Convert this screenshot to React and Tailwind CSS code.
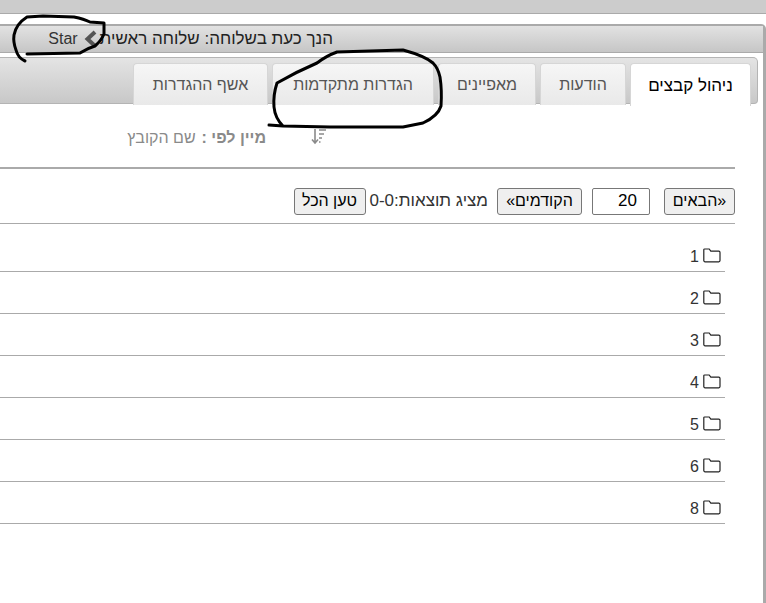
import React from "react";

const tabs = [
  { label: "ניהול קבצים", w: "w-[121px]", active: true },
  { label: "הודעות", w: "w-[86px]" },
  { label: "מאפיינים", w: "w-[98px]" },
  { label: "הגדרות מתקדמות", w: "w-[162px]" },
  { label: "אשף ההגדרות", w: "w-[135px]" },
];

const folders = ["1", "2", "3", "4", "5", "6", "8"];

const FolderIcon = () => (
  <svg width="18" height="15" viewBox="0 0 18 15" fill="none" stroke="#222" strokeWidth="1.2" className="shrink-0">
    <path d="M1.6 1h4.6l1.6 2.2h8a1.2 1.2 0 0 1 1.2 1.2v8.2a1.2 1.2 0 0 1-1.2 1.2H2a1.2 1.2 0 0 1-1.2-1.2V1.8A.8.8 0 0 1 1.6 1z" />
  </svg>
);

const SortIcon = () => (
  <svg width="17" height="17" viewBox="0 0 17 17" fill="none" stroke="#8a8a8a" strokeWidth="1.6" className="shrink-0">
    <path d="M5 1v13M2 11.500l3 3.500 3-3.500" />
    <path d="M9 2h7M9 6h5M9 10h3M9 14h1.500" />
  </svg>
);

const App = () => {
  return (
    <div dir="rtl" className="relative w-[766px] h-[603px] overflow-hidden bg-white font-['Liberation_Sans',Arial,sans-serif] text-[16px] text-[#222]">
      <div className="h-[14px] bg-[#cccccc] border-b border-[#aaaaaa]" />

      {/* Panel */}
      <div className="mt-[10px] ml-[-10px] h-[600px] border-t-2 border-r-[3px] border-[#aaaaaa] rounded-tr-[5px]">
        <div className="flex items-center h-[27px] pr-[430px] bg-gradient-to-b from-[#e2e2e2] to-[#c6c6c6] border-b border-[#aaaaaa]">
          <span className="text-[17px] whitespace-nowrap">הנך כעת בשלוחה: שלוחה ראשית</span>
          <svg width="17" height="18" viewBox="0 0 17 18" fill="none" stroke="#555" strokeWidth="4" className="mr-[0px] ml-[5px] shrink-0">
            <path d="M12 2 4.500 9l7.500 7" />
          </svg>
          <span className="text-[16px] text-[#333]">Star</span>
        </div>

        {/* Tabs */}
        <div className="mt-[4px] mr-[5px] h-[47px] flex gap-[4px] pr-[6px] pt-[5px] rounded-t-[5px] rounded-bl-none rounded-br-[4px] border-t border-r border-b border-[#b4b4b4] bg-gradient-to-b from-[#e4e4e4] to-[#c8c8c8]">
          {tabs.map((tab) => (
            <div
              key={tab.label}
              className={`${tab.w} flex justify-center pt-[9px] rounded-t-[4px] border-t border-x border-[#d6d6d6] whitespace-nowrap ${
                tab.active
                  ? "h-[43px] bg-white text-black text-[17px] border-[#bbbbbb]"
                  : "h-[42px] bg-gradient-to-b from-[#f6f6f6] to-[#e9e9e9] text-[#555] text-[16px]"
              }`}
            >
              {tab.label}
            </div>
          ))}
        </div>

        {/* Sort row */}
        <div className="flex items-start h-[65px] mr-[28px] pt-[24px] pr-[408px] border-b-2 border-[#aaaaaa] text-[#8a8a8a]">
          <SortIcon />
          <div className="mr-[44px] mt-[1px] text-[16px] leading-[18px] whitespace-nowrap">
            <span className="font-bold">מיין לפי :</span>
            <span className="mr-[6px]">שם הקובץ</span>
          </div>
        </div>

        {/* Paging */}
        <div className="flex items-center h-[55px] mr-[28px] pt-[10px] border-b border-[#aaaaaa]">
          <button className="w-[71px] h-[27px] border border-[#777] rounded-[3px] bg-[#efefef] text-[16px] text-black">«הבאים</button>
          <input
            defaultValue="20"
            dir="ltr"
            className="w-[58px] h-[27px] mr-[14px] pr-[12px] border border-[#777] rounded-[2px] text-[17px] text-black text-right outline-none"
          />
          <button className="w-[85px] h-[27px] mr-[10px] border border-[#777] rounded-[3px] bg-[#efefef] text-[16px] text-black">הקודמים»</button>
          <span className="mr-[9px] text-[17px] text-[#333] whitespace-nowrap">מציג תוצאות:0-0</span>
          <button className="w-[72px] h-[27px] mr-[4px] border border-[#777] rounded-[3px] bg-[#efefef] text-[16px] text-black">טען הכל</button>
        </div>

        {/* Folder list */}
        <div className="mr-[38px]">
          {folders.map((name, i) => (
            <div
              key={name}
              className={`flex items-center gap-[4px] pr-[4px] border-b border-[#aaaaaa] text-[16px] text-[#333] ${i === 0 ? "h-[48px] pt-[16px]" : "h-[42px] pt-[10px]"}`}
            >
              <FolderIcon />
              <span className="mt-[2px]">{name}</span>
            </div>
          ))}
        </div>
      </div>

      {/* Marker scribbles over the screenshot */}
      <svg width="766" height="603" className="absolute top-0 left-0 pointer-events-none" fill="none" stroke="#000" strokeWidth="3" strokeLinecap="round" strokeLinejoin="round">
        <path d="M25 61 Q18 58 16 50 Q13 42 14 35 Q16 24 27 17 L43 16 L74 17 Q84 19 90 22 L104 23 L104 34 Q101 41 95 46 Q88 48 80 53 L27 54" />
        <path d="M269 125 L283 126 L330 127 L403 127 L423 123 Q438 116 441 106 Q442 90 440 77 Q438 68 433 63 Q425 56 403 50 L337 52 Q326 56 317 63 Q296 72 277 83 Q273 95 274 107 Q275 118 283 126" />
      </svg>
    </div>
  );
};

export default App;
